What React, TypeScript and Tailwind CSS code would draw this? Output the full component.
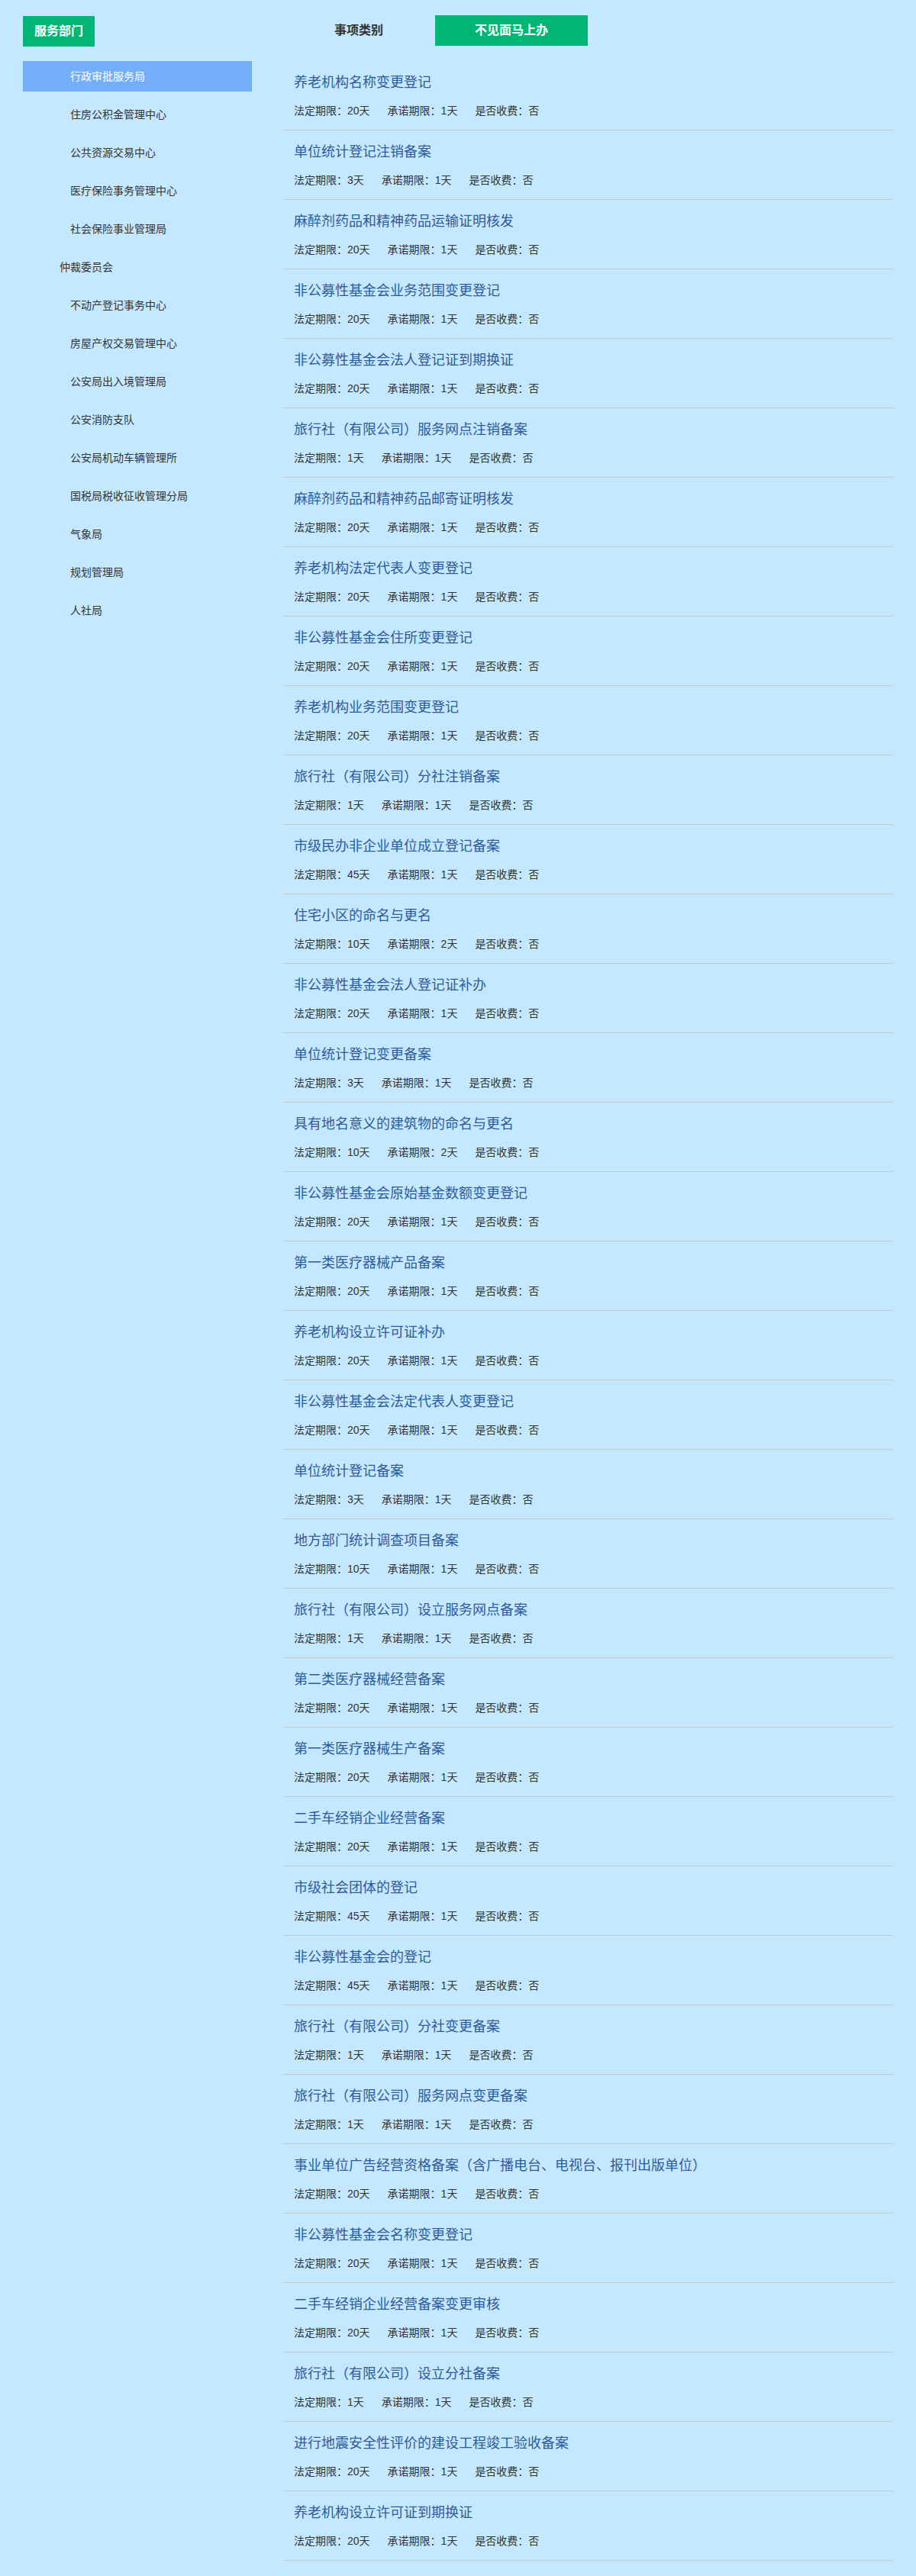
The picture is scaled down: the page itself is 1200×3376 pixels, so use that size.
import React from "react";

const departments = [
  { name: "行政审批服务局", active: true },
  { name: "住房公积金管理中心" },
  { name: "公共资源交易中心" },
  { name: "医疗保险事务管理中心" },
  { name: "社会保险事业管理局" },
  { name: "仲裁委员会", outdent: true },
  { name: "不动产登记事务中心" },
  { name: "房屋产权交易管理中心" },
  { name: "公安局出入境管理局" },
  { name: "公安消防支队" },
  { name: "公安局机动车辆管理所" },
  { name: "国税局税收征收管理分局" },
  { name: "气象局" },
  { name: "规划管理局" },
  { name: "人社局" },
];

const items: [string, number, number][] = [
  ["养老机构名称变更登记", 20, 1],
  ["单位统计登记注销备案", 3, 1],
  ["麻醉剂药品和精神药品运输证明核发", 20, 1],
  ["非公募性基金会业务范围变更登记", 20, 1],
  ["非公募性基金会法人登记证到期换证", 20, 1],
  ["旅行社（有限公司）服务网点注销备案", 1, 1],
  ["麻醉剂药品和精神药品邮寄证明核发", 20, 1],
  ["养老机构法定代表人变更登记", 20, 1],
  ["非公募性基金会住所变更登记", 20, 1],
  ["养老机构业务范围变更登记", 20, 1],
  ["旅行社（有限公司）分社注销备案", 1, 1],
  ["市级民办非企业单位成立登记备案", 45, 1],
  ["住宅小区的命名与更名", 10, 2],
  ["非公募性基金会法人登记证补办", 20, 1],
  ["单位统计登记变更备案", 3, 1],
  ["具有地名意义的建筑物的命名与更名", 10, 2],
  ["非公募性基金会原始基金数额变更登记", 20, 1],
  ["第一类医疗器械产品备案", 20, 1],
  ["养老机构设立许可证补办", 20, 1],
  ["非公募性基金会法定代表人变更登记", 20, 1],
  ["单位统计登记备案", 3, 1],
  ["地方部门统计调查项目备案", 10, 1],
  ["旅行社（有限公司）设立服务网点备案", 1, 1],
  ["第二类医疗器械经营备案", 20, 1],
  ["第一类医疗器械生产备案", 20, 1],
  ["二手车经销企业经营备案", 20, 1],
  ["市级社会团体的登记", 45, 1],
  ["非公募性基金会的登记", 45, 1],
  ["旅行社（有限公司）分社变更备案", 1, 1],
  ["旅行社（有限公司）服务网点变更备案", 1, 1],
  ["事业单位广告经营资格备案（含广播电台、电视台、报刊出版单位）", 20, 1],
  ["非公募性基金会名称变更登记", 20, 1],
  ["二手车经销企业经营备案变更审核", 20, 1],
  ["旅行社（有限公司）设立分社备案", 1, 1],
  ["进行地震安全性评价的建设工程竣工验收备案", 20, 1],
  ["养老机构设立许可证到期换证", 20, 1],
];

export default function App() {
  return (
    <div className="min-h-screen bg-[#c3e8ff] font-['Liberation_Sans','Noto_Sans_CJK_SC',sans-serif] text-[#333]">
      <div className="flex pl-[30px] pt-[20px] pb-[21px] gap-[40px]">
        {/* sidebar */}
        <aside className="w-[300px]">
          <div className="mt-[1px] h-[40px] w-[94px] bg-[#00b674] text-white text-[16px] font-bold flex items-center justify-center">
            服务部门
          </div>
          <ul className="mt-[19px]">
            {departments.map((d) => (
              <li
                key={d.name}
                className={`h-[40px] mb-[10px] flex items-center text-[14px] ${
                  d.outdent ? "pl-[48px]" : "pl-[62px]"
                } ${d.active ? "bg-[#73aff9] text-white" : "text-[#333]"}`}
              >
                {d.name}
              </li>
            ))}
          </ul>
        </aside>

        {/* main */}
        <main className="w-[800px]">
          <div className="flex h-[40px]">
            <div className="w-[200px] flex items-center justify-center text-[16px] font-bold text-[#333]">
              事项类别
            </div>
            <div className="w-[200px] flex items-center justify-center bg-[#00b674] text-white text-[16px] font-bold">
              不见面马上办
            </div>
          </div>
          <ul className="mt-[20px]">
            {items.map(([title, legal, promise], i) => (
              <li key={i} className="border-b border-[#c8c8c8] pl-[15px] pt-[16px] pb-[17px]">
                <div className="text-[18px] leading-[24px] text-[#2f5b9b]">{title}</div>
                <div className="mt-[17px] flex gap-[23px] text-[14px] leading-[16px] text-[#333]">
                  <span>法定期限：{legal}天</span>
                  <span>承诺期限：{promise}天</span>
                  <span>是否收费：否</span>
                </div>
              </li>
            ))}
          </ul>
        </main>
      </div>
    </div>
  );
}
